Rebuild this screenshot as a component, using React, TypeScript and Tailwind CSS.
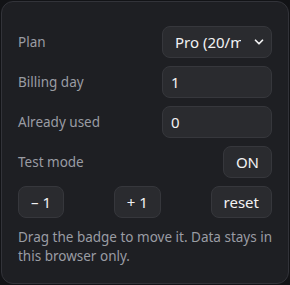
import { ChevronDown } from 'lucide-react';

const font = { fontFamily: '"Segoe UI", "Noto Sans", "Liberation Sans", sans-serif' };

function Row({ label, children }: { label: string; children: React.ReactNode }) {
  return (
    <div className="flex items-center justify-between h-8">
      <span className="text-[13.5px] text-[#9a9ca3]">{label}</span>
      {children}
    </div>
  );
}

export default function App() {
  const field =
    'w-[110px] h-8 rounded-lg bg-[#2a2b2f] border border-[#36373c] text-[15px] text-[#f2f2f3] px-2 outline-none';
  const btn =
    'h-8 px-3 rounded-lg bg-[#2a2b2f] border border-[#36373c] text-[15px] text-[#f2f2f3] leading-none';

  return (
    <div className="w-[290px] h-[285px] bg-[#121316] p-px" style={font}>
      <div className="h-full rounded-xl border border-[#323339] bg-[#1e1f23] px-4 pt-6 pb-4 flex flex-col">
        <div className="flex flex-col gap-2">
          <Row label="Plan">
            <div className="relative">
              <select className={field + ' appearance-none pl-3 pr-[30px]'} defaultValue="pro">
                <option value="free">Free</option>
                <option value="pro">Pro (20/month)</option>
              </select>
              <ChevronDown
                className="absolute right-[6px] top-1/2 -translate-y-1/2 w-3.5 h-3.5 text-[#f2f2f3] pointer-events-none"
                strokeWidth={3}
              />
            </div>
          </Row>
          <Row label="Billing day">
            <input className={field} defaultValue="1" />
          </Row>
          <Row label="Already used">
            <input className={field} defaultValue="0" />
          </Row>
          <Row label="Test mode">
            <button className={btn}>ON</button>
          </Row>
          <div className="flex items-center justify-between">
            <button className={btn}>– 1</button>
            <button className={btn}>+ 1</button>
            <button className={btn}>reset</button>
          </div>
        </div>
        <p className="mt-2.5 text-[13.5px] leading-[19px] text-[#9a9ca3]">
          Drag the badge to move it. Data stays in this browser only.
        </p>
      </div>
    </div>
  );
}
